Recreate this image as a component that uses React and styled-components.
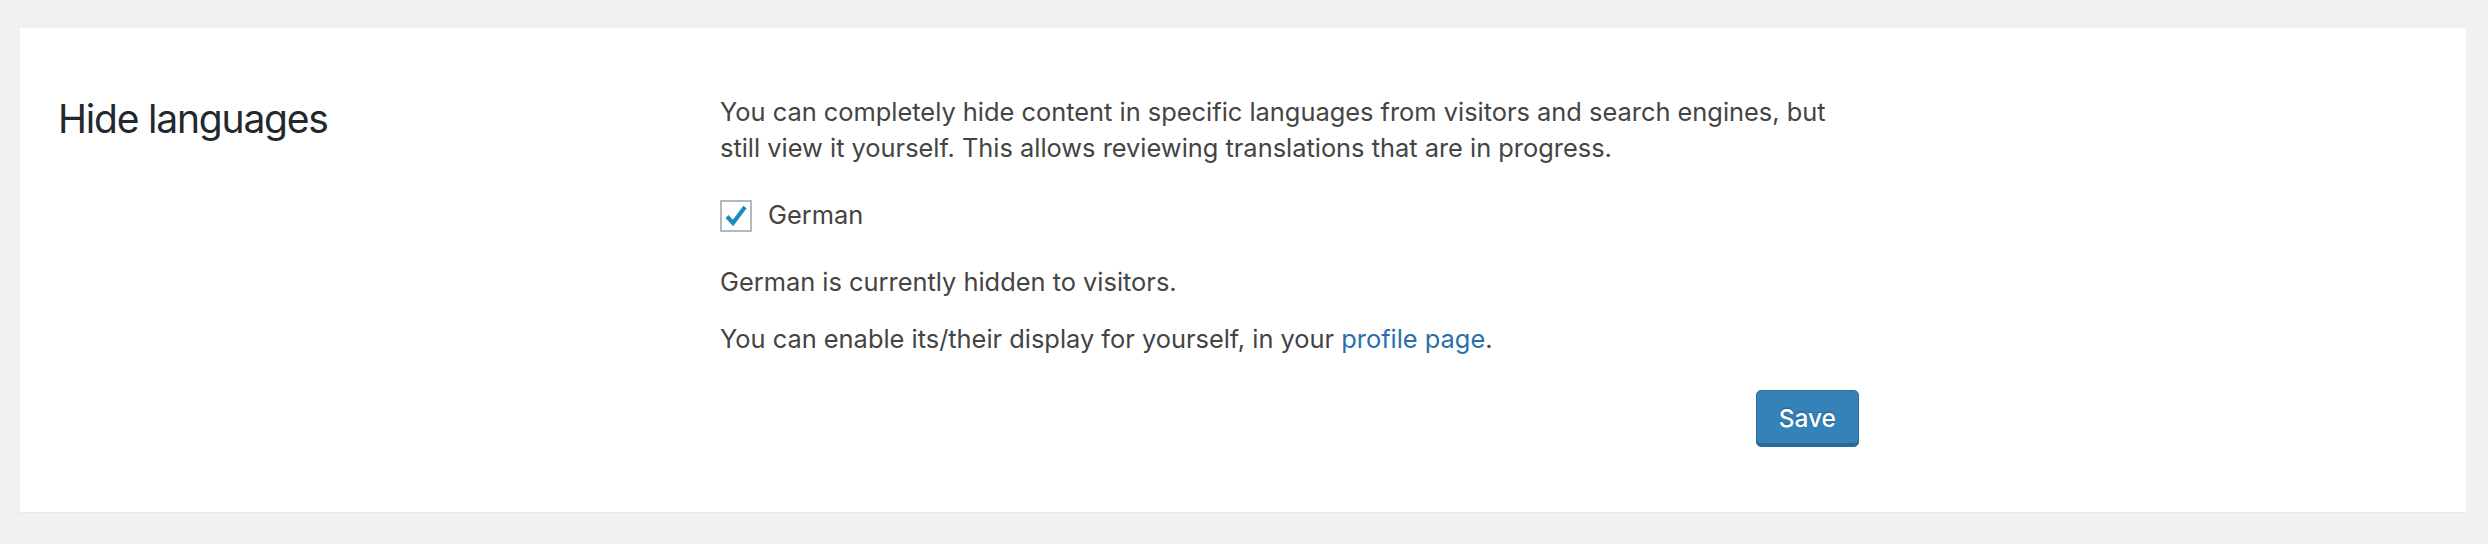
import React from 'react'
import styled, { createGlobalStyle } from 'styled-components'

const GlobalStyle = createGlobalStyle`
    body {
        margin: 0;
        background: #f1f1f1;
        font-family: Inter, "Liberation Sans", sans-serif;
        color: #444;
    }
`

const Page = styled.div`
    padding: 28px 22px 30px 20px;
`

const Panel = styled.section`
    background: #fff;
    box-shadow: 0 1px 1px rgba(0, 0, 0, 0.04);
    display: grid;
    grid-template-columns: 662px 1139px;
    padding: 66px 0 65px 38px;
`

const Heading = styled.h2`
    margin: 0;
    font-size: 39px;
    line-height: 50px;
    font-weight: 400;
    letter-spacing: -1.2px;
    color: #23282d;
`

const Content = styled.div`
    display: flex;
    flex-direction: column;
`

const Text = styled.p`
    margin: ${(p) => p.$top || 0}px 0 0;
    max-width: 1125px;
    font-size: 25.4px;
    line-height: 36px;
`

const CheckRow = styled.label`
    display: flex;
    align-items: center;
    gap: 16px;
    margin-top: 31px;
    font-size: 25.4px;
    line-height: 36px;
    cursor: pointer;
`

const Box = styled.span`
    width: 32px;
    height: 32px;
    box-sizing: border-box;
    border: 2px solid #b4b9be;
    background: #fff;
    display: flex;
    align-items: center;
    justify-content: center;
    margin-top: 2px;
`

const Link = styled.a`
    color: #2a6fa9;
    text-decoration: none;
`

const Actions = styled.div`
    display: flex;
    justify-content: flex-end;
    margin-top: 33px;
`

const Button = styled.button`
    height: 57px;
    padding: 0 22px 2px;
    box-sizing: border-box;
    border: 1px solid #2b6ea3;
    border-radius: 5px;
    background: #3582b8;
    box-shadow: inset 0 -3px 0 #29689a;
    color: #fff;
    font-family: Inter, "Liberation Sans", sans-serif;
    font-size: 24.5px;
    font-weight: 500;
    text-shadow: 0 -1px 2px #1f5b8a;
    cursor: pointer;
`

const Check = () => (
    <svg width="26" height="26" viewBox="0 0 26 26">
        <path d="M4 13.5 L10 20 L22 4" fill="none" stroke="#1e8cbe" strokeWidth="4.2" strokeLinecap="butt" strokeLinejoin="miter" />
    </svg>
)

const App = () => {
    return (
        <>
            <GlobalStyle />
            <Page>
                <Panel>
                    <Heading>Hide languages</Heading>
                    <Content>
                        <Text>
                            You can completely hide content in specific languages from visitors and search engines, but
                            still view it yourself. This allows reviewing translations that are in progress.
                        </Text>
                        <CheckRow>
                            <Box>
                                <Check />
                            </Box>
                            German
                        </CheckRow>
                        <Text $top={31}>German is currently hidden to visitors.</Text>
                        <Text $top={21}>
                            You can enable its/their display for yourself, in your <Link href="#">profile page</Link>.
                        </Text>
                        <Actions>
                            <Button>Save</Button>
                        </Actions>
                    </Content>
                </Panel>
            </Page>
        </>
    )
}

export default App
